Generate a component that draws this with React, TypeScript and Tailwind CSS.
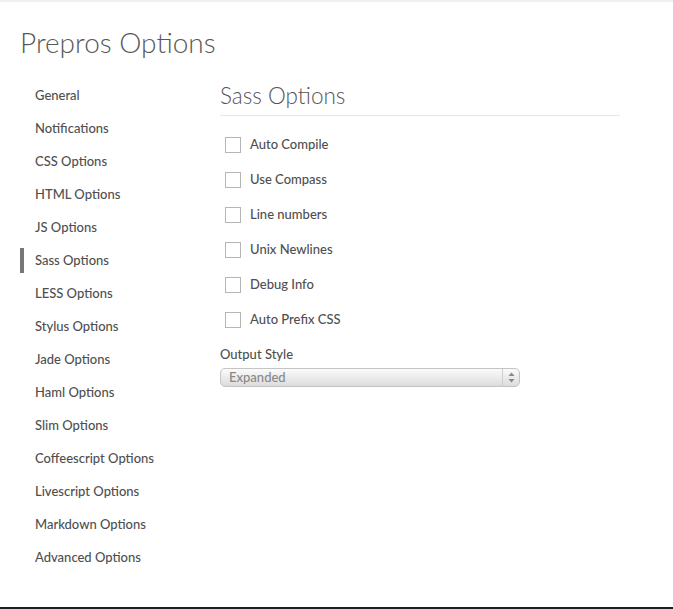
const navItems = [
  "General",
  "Notifications",
  "CSS Options",
  "HTML Options",
  "JS Options",
  "Sass Options",
  "LESS Options",
  "Stylus Options",
  "Jade Options",
  "Haml Options",
  "Slim Options",
  "Coffeescript Options",
  "Livescript Options",
  "Markdown Options",
  "Advanced Options",
];

const sassOptions = [
  "Auto Compile",
  "Use Compass",
  "Line numbers",
  "Unix Newlines",
  "Debug Info",
  "Auto Prefix CSS",
];

export default function App() {
  return (
    <div className="h-[609px] w-full bg-white flex flex-col font-['Lato',sans-serif] text-[#555] overflow-hidden">
      <div className="border-t-2 border-[#f0f0f0]" />
      <div className="flex-1 flex flex-col">
        <h1 className="pl-5 pt-[22px] h-[77px] text-[28px] font-light text-[#595959] leading-[36px]">
          Prepros Options
        </h1>

        <div className="flex">
          {/* Sidebar */}
          <ul className="w-[220px] pl-5">
            {navItems.map((item) => (
              <li key={item} className="h-[33px] flex items-center">
                <span
                  className={
                    item === "Sass Options"
                      ? "w-1 h-[25px] bg-[#777] mr-[11px]"
                      : "w-1 h-[25px] mr-[11px]"
                  }
                />
                <span className="text-[13px] font-medium text-[#4f4f4f]">{item}</span>
              </li>
            ))}
          </ul>

          {/* Content */}
          <div className="w-[400px]">
            <h2 className="h-[37px] border-b border-[#e6e6e6] text-[22.5px] font-light text-[#555] leading-[33px]">
              Sass Options
            </h2>
            <div className="mt-[11px] flex flex-col">
              {sassOptions.map((opt) => (
                <label key={opt} className="h-[35px] flex items-center pl-[5px]">
                  <span className="w-4 h-4 border border-[#b5b5b5] bg-white mr-[9px]" />
                  <span className="text-[13px] font-medium text-[#4f4f4f]">{opt}</span>
                </label>
              ))}
            </div>
            <div className="mt-[7px] text-[13px] font-medium text-[#4f4f4f] leading-[20px]">Output Style</div>
            <div className="mt-[4px] w-[300px] h-[19px] rounded-[5px] border border-[#c4c4c4] bg-gradient-to-b from-[#fbfbfb] via-[#ebebeb] to-[#dcdcdc] flex items-center">
              <span className="flex-1 pl-2 text-[13px] font-medium text-[#888]">Expanded</span>
              <span className="w-[17px] h-full border-l border-[#cfcfcf] flex items-center justify-center">
                <svg width="7" height="11" viewBox="0 0 7 11">
                  <path d="M3.5 0.5 L6.5 4 L0.5 4 Z" fill="#888" />
                  <path d="M3.5 10.5 L6.5 7 L0.5 7 Z" fill="#888" />
                </svg>
              </span>
            </div>
          </div>
        </div>
      </div>
      <div className="h-[2px] bg-[#1f1f1f]" />
    </div>
  );
}
